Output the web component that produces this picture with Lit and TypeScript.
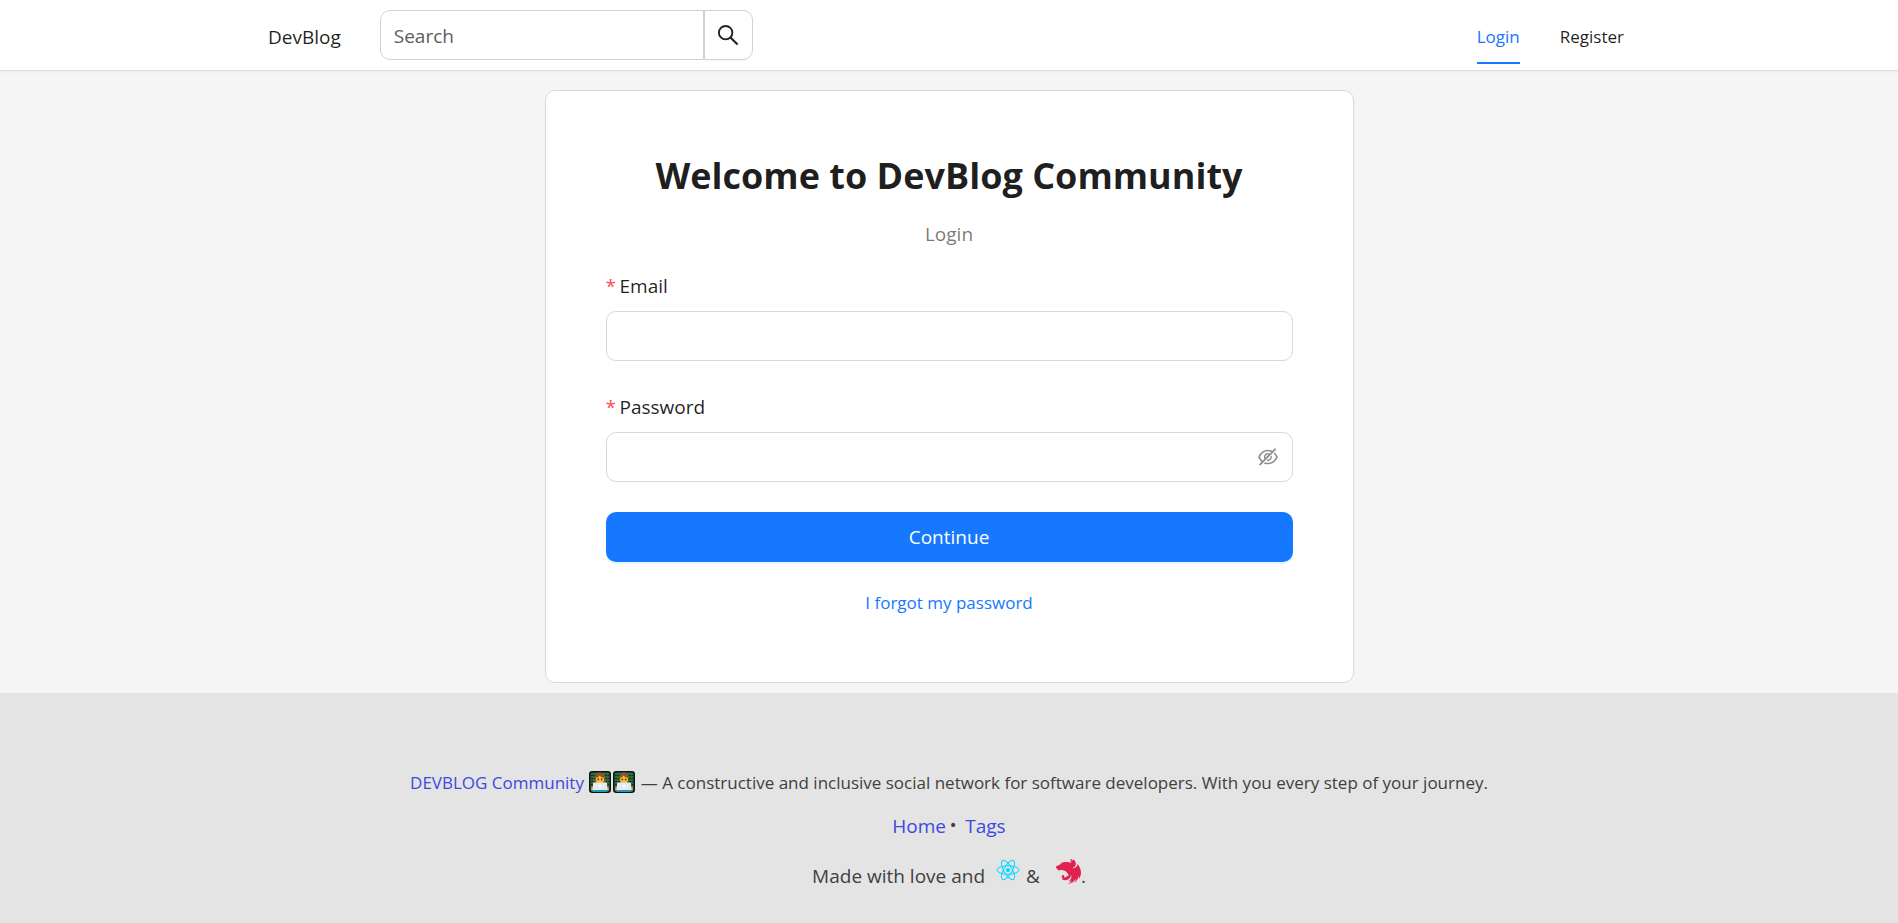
import { LitElement, html, css, svg } from "lit";
import { customElement, state } from "lit/decorators.js";

const searchIcon = html`<svg class="search-icon" viewBox="0 0 24 24" aria-hidden="true">
  <circle cx="9" cy="9" r="7" fill="none" stroke="currentColor" stroke-width="2" />
  <path d="M14 14 L21.5 21.5" fill="none" stroke="currentColor" stroke-width="2.2" />
</svg>`;

const eyeIcon = html`<svg class="eye-icon" viewBox="64 64 896 896" fill="currentColor" aria-hidden="true">
  <path d="M942.2 486.2Q889.47 375.11 816.7 305l-50.88 50.88C807.31 395.53 843.45 447.4 874.7 512 791.5 684.2 673.4 766 512 766q-72.67 0-133.87-22.38L323 798.75Q408 838 512 838q288.3 0 430.2-300.3a60.29 60.29 0 000-51.5zm-63.57-320.64L836 122.88a8 8 0 00-11.32 0L715.31 232.2Q624.86 186 512 186q-288.3 0-430.2 300.3a60.3 60.3 0 000 51.5q56.69 119.4 136.5 191.41L112.48 835a8 8 0 000 11.31L155.17 889a8 8 0 0011.31 0l712.15-712.12a8 8 0 000-11.32zM149.3 512C232.6 339.8 350.7 258 512 258c54.54 0 104.13 9.36 149.12 28.39l-70.3 70.3a176 176 0 00-238.13 238.13l-83.42 83.42C223.1 637.49 183.3 582.28 149.3 512zm246.7 0a112.11 112.11 0 01146.2-106.69L401.31 546.2A112 112 0 01396 512z" />
  <path d="M508 624c-3.46 0-6.87-.16-10.25-.47l-52.82 52.82a176.09 176.09 0 00227.42-227.42l-52.82 52.82c.31 3.38.47 6.79.47 10.25a111.94 111.94 0 01-112 112z" />
</svg>`;

const womanHair = svg`<path d="M5.4 12 C5 4.5 7 1.6 11 1.6 S17 4.5 16.6 12 Z" fill="#8f5430" />`;
const manHair = svg`<path d="M6.6 8 C6 4 8 1.6 11 1.6 S16 4 15.4 8 Z" fill="#8f5430" />`;

// Person at a laptop in front of a dark screen of green code.
const technologist = (label: string, woman: boolean) => html`<svg class="emoji" viewBox="0 0 22 22" role="img" aria-label=${label}>
  <rect x="0.75" y="0.75" width="20.5" height="20.5" rx="2.5" fill="#2c6b3c" stroke="#0d1512" stroke-width="1.5" />
  <path d="M2 4.5H20M2 7.5H20M2 10.5H20M2 13.5H20" stroke="#14241b" stroke-width="0.9" stroke-dasharray="2 0.8" />
  ${woman ? womanHair : manHair}
  <path d="M7 6.8 Q9.5 6.6 10.5 4.4 Q12 6.6 15 6.8 V9 C15 11.8 13.2 13 11 13 S7 11.8 7 9 Z" fill="#fcb827" />
  <circle cx="9.3" cy="8.4" r="0.8" fill="#40302a" />
  <circle cx="12.7" cy="8.4" r="0.8" fill="#40302a" />
  <path d="M2 20 V18 Q2 14.5 5 14 H17 Q20 14.5 20 18 V20 Z" fill="#6f5bb5" />
  <path d="M2.5 16 h2.4 v3.6 h-2.4z M17.1 16 h2.4 v3.6 h-2.4z" fill="#fcb827" />
  <rect x="4" y="11.5" width="14" height="8" rx="1" fill="#e3ebf2" />
  <rect x="9.7" y="14" width="2.6" height="2.4" fill="#fff" />
  <rect x="3.6" y="19" width="14.8" height="2" fill="#1f9ab4" />
</svg>`;

const reactLogo = html`<svg class="react-logo" viewBox="-12 -11 24 22" role="img" aria-label="React">
  <circle r="2.1" fill="#00d8ff" />
  <g fill="none" stroke="#00d8ff" stroke-width="1">
    <ellipse rx="11" ry="4.2" />
    <ellipse rx="11" ry="4.2" transform="rotate(60)" />
    <ellipse rx="11" ry="4.2" transform="rotate(120)" />
  </g>
</svg>`;

const nestLogo = html`<svg class="nest-logo" viewBox="0 0 24 24" fill="#e0234e" role="img" aria-label="NestJS">
  <path d="M14.131.047c-.173 0-.334.037-.483.087.316.21.49.49.576.806.007.043.019.074.025.117a.681.681 0 0 1 .013.112c.024.545-.143.614-.26.936-.18.415-.13.861.086 1.22a.74.74 0 0 0 .074.137c-.235-1.568 1.073-1.803 1.314-2.293.019-.428-.334-.713-.613-.911a1.37 1.37 0 0 0-.732-.21zM16.102.4c-.024.143-.006.106-.012.18-.006.05-.006.112-.012.161-.013.05-.025.1-.044.149-.012.05-.03.1-.05.149l-.067.142c-.02.025-.031.05-.05.075l-.037.055a2.152 2.152 0 0 1-.093.124c-.037.038-.068.08-.112.112v.006c-.037.031-.074.068-.118.1-.13.099-.278.173-.415.266-.043.03-.087.056-.124.093a.906.906 0 0 0-.118.099c-.043.037-.074.074-.111.118-.031.037-.068.08-.093.124a1.582 1.582 0 0 0-.087.13c-.025.05-.043.093-.068.142-.019.05-.037.093-.05.143a2.007 2.007 0 0 0-.043.155c-.006.025-.006.056-.012.08-.007.025-.007.05-.013.075 0 .05-.006.105-.006.155 0 .037 0 .074.006.111 0 .05.006.1.019.155.006.05.018.1.03.15.02.049.032.098.05.148.013.03.031.062.044.087l-1.426-.552c-.241-.068-.477-.13-.719-.186l-.39-.093c-.372-.074-.75-.13-1.128-.167-.013 0-.019-.006-.031-.006A11.082 11.082 0 0 0 8.9 2.855c-.378.025-.756.074-1.134.136a12.45 12.45 0 0 0-.837.174l-.279.074c-.092.037-.18.08-.266.118l-.205.093c-.012.006-.024.006-.03.012-.063.031-.118.056-.174.087a2.738 2.738 0 0 0-.236.118c-.043.018-.086.043-.124.062a.559.559 0 0 1-.055.03c-.056.032-.112.063-.162.094a1.56 1.56 0 0 0-.148.093c-.044.03-.087.055-.124.086-.006.007-.013.007-.019.013-.037.025-.08.056-.118.087l-.012.012-.093.074c-.012.007-.025.019-.037.025-.031.025-.062.056-.093.08-.006.013-.019.02-.025.025-.037.038-.074.069-.111.106-.007 0-.007.006-.013.012a1.742 1.742 0 0 0-.111.106c-.007.006-.007.012-.013.012a1.454 1.454 0 0 0-.093.1c-.012.012-.03.024-.043.036a1.374 1.374 0 0 1-.106.112c-.006.012-.018.019-.024.03-.05.05-.093.1-.143.15l-.018.018c-.1.106-.205.211-.317.304-.111.1-.229.192-.347.273a3.777 3.777 0 0 1-.762.421c-.13.056-.267.106-.403.149-.26.056-.527.161-.756.18-.05 0-.105.012-.155.018l-.155.037-.149.056c-.05.019-.099.044-.148.068-.044.031-.093.056-.137.087a1.011 1.011 0 0 0-.124.106c-.043.03-.087.074-.124.111-.037.043-.074.08-.105.124-.031.05-.068.093-.093.143a1.092 1.092 0 0 0-.087.142c-.025.056-.05.106-.068.161-.019.05-.037.106-.056.161-.012.05-.025.1-.03.15 0 .005-.007.012-.007.018-.012.056-.012.13-.019.167C.006 7.95 0 7.986 0 8.03a.657.657 0 0 0 .074.31v.006c.019.037.044.075.069.112.024.037.05.074.08.111.031.031.068.069.106.1a.906.906 0 0 0 .117.099c.149.13.186.173.378.272.031.019.062.031.1.05.006 0 .012.006.018.006 0 .013 0 .019.006.031a1.272 1.272 0 0 0 .08.298c.02.037.032.074.05.111.007.013.013.025.02.031.024.05.049.093.073.137l.093.13c.031.037.069.08.106.118.037.037.074.068.118.105 0 0 .006.006.012.006.037.031.074.062.112.087a.986.986 0 0 0 .136.08c.043.025.093.05.142.069a.73.73 0 0 0 .124.043c.007.006.013.006.025.012.025.007.056.013.08.019-.018.335-.024.65.026.762.055.124.328-.254.6-.688-.036.428-.061.93 0 1.079.069.155.44-.329.763-.862 4.395-1.016 8.405 2.02 8.826 6.31-.08-.67-.905-1.041-1.283-.948-.186.458-.502 1.047-1.01 1.413.043-.41.025-.83-.062-1.24a4.009 4.009 0 0 1-.769 1.562c-.588.043-1.177-.242-1.487-.67-.025-.018-.031-.055-.05-.08-.018-.043-.037-.087-.05-.13a.515.515 0 0 1-.037-.13c-.006-.044-.006-.087-.006-.137v-.093a.992.992 0 0 1 .031-.13c.013-.043.025-.086.044-.13.024-.043.043-.087.074-.13.105-.298.105-.54-.087-.682a.706.706 0 0 0-.118-.062c-.024-.006-.055-.018-.08-.025l-.05-.018a.847.847 0 0 0-.13-.031.472.472 0 0 0-.13-.019 1.01 1.01 0 0 0-.136-.012c-.031 0-.062.006-.093.006a.484.484 0 0 0-.137.019c-.043.006-.086.012-.13.024a1.068 1.068 0 0 0-.13.044c-.043.018-.08.037-.124.056-.037.018-.074.043-.118.062-1.444.942-.582 3.148.403 3.787-.372.068-.75.148-.855.229l-.013.012c.267.161.546.298.837.416.397.13.818.247 1.004.297v.006a5.996 5.996 0 0 0 1.562.112c2.746-.192 4.996-2.281 5.405-5.033l.037.161c.019.112.043.23.056.347v.006c.012.056.018.112.025.162v.024c.006.056.012.112.012.162.006.068.012.136.012.204v.1c0 .03.007.067.007.098 0 .038-.007.075-.007.112v.087c0 .043-.006.08-.006.124 0 .025 0 .05-.006.08 0 .044-.006.087-.006.137-.006.018-.006.037-.006.055l-.02.143c0 .019 0 .037-.005.056-.007.062-.019.118-.025.18v.012l-.037.174v.018l-.037.167c0 .007-.007.02-.007.025a1.663 1.663 0 0 1-.043.168v.018c-.019.062-.037.118-.05.174-.006.006-.006.012-.006.012l-.056.186c-.024.062-.043.118-.068.18-.025.062-.043.124-.068.18-.025.062-.05.117-.074.18h-.007c-.024.055-.05.117-.08.173a.302.302 0 0 1-.019.043c-.006.006-.006.013-.012.019a5.867 5.867 0 0 1-1.742 2.082c-.05.031-.099.069-.149.106-.012.012-.03.018-.043.03a2.603 2.603 0 0 1-.136.094l.018.037h.007l.26-.037h.006c.161-.025.322-.056.483-.087.044-.006.093-.019.137-.031l.087-.019c.043-.006.086-.018.13-.024.037-.013.074-.02.111-.031.62-.15 1.221-.354 1.798-.595a9.926 9.926 0 0 1-3.85 3.142c.714-.05 1.426-.167 2.114-.366a9.903 9.903 0 0 0 5.857-4.68 9.893 9.893 0 0 1-1.667 3.986 9.758 9.758 0 0 0 1.655-1.376 9.824 9.824 0 0 0 2.61-5.268c.21.98.272 1.99.18 2.987 4.474-6.241.371-12.712-1.346-14.416-.006-.013-.012-.019-.012-.031-.006.006-.006.006-.006.012 0-.006 0-.006-.007-.012 0 .074-.006.148-.012.223a8.34 8.34 0 0 1-.062.415c-.03.136-.068.273-.105.41-.044.13-.093.266-.15.396a5.322 5.322 0 0 1-.185.378 4.735 4.735 0 0 1-.477.688c-.093.111-.192.21-.292.31a3.994 3.994 0 0 1-.18.155l-.142.124a3.459 3.459 0 0 1-.347.241 4.295 4.295 0 0 1-.366.211c-.13.062-.26.118-.39.174a4.364 4.364 0 0 1-.818.223c-.143.025-.285.037-.422.05a4.914 4.914 0 0 1-.297.012 4.66 4.66 0 0 1-.422-.025 3.137 3.137 0 0 1-.421-.062 3.136 3.136 0 0 1-.415-.105h-.007c.137-.013.273-.025.41-.05a4.493 4.493 0 0 0 .818-.223c.136-.05.266-.112.39-.174.13-.062.248-.13.372-.204.118-.08.235-.161.347-.248.112-.087.217-.18.316-.279.105-.093.198-.198.291-.304.093-.111.18-.223.26-.334.013-.019.026-.044.038-.062.062-.1.124-.199.18-.298a4.272 4.272 0 0 0 .334-.775c.044-.13.075-.266.106-.403.025-.142.05-.278.062-.415.012-.142.025-.285.025-.421 0-.1-.007-.199-.013-.298a6.726 6.726 0 0 0-.05-.415 4.493 4.493 0 0 0-.092-.415c-.044-.13-.087-.267-.137-.397-.05-.13-.111-.26-.173-.384-.069-.124-.137-.248-.211-.366a6.843 6.843 0 0 0-.248-.34c-.093-.106-.186-.212-.285-.317a3.878 3.878 0 0 0-.161-.155c-.28-.217-.57-.421-.862-.607a1.154 1.154 0 0 0-.124-.062 2.415 2.415 0 0 0-.589-.26Z" />
</svg>`;

@customElement("site-header")
class SiteHeader extends LitElement {
  static styles = css`
    :host {
      display: block;
      background: #fff;
      border-bottom: 1px solid #dedede;
      box-shadow: 0 1px 2px rgba(0, 0, 0, 0.05);
    }
    .bar {
      box-sizing: border-box;
      max-width: 1402px;
      height: 70px;
      margin: 0 auto;
      padding: 0 20px;
      display: flex;
      align-items: center;
    }
    a {
      text-decoration: none;
      color: rgba(0, 0, 0, 0.88);
    }
    .brand {
      font-size: 19px;
      line-height: 30px;
      padding-top: 3px;
      margin-right: 39px;
    }
    .search {
      display: flex;
      flex: 0 1 373px;
      min-width: 0;
      height: 50px;
    }
    .search-input {
      box-sizing: border-box;
      flex: 1;
      min-width: 0;
      padding: 2px 13px 0;
      border: 1px solid #d0d0d0;
      border-radius: 10px 0 0 10px;
      font: inherit;
      font-size: 19px;
      color: rgba(0, 0, 0, 0.88);
      background: #fff;
      outline: none;
    }
    .search-input::placeholder {
      color: #5c5c5c;
      opacity: 1;
    }
    .search-button {
      box-sizing: border-box;
      width: 49px;
      padding: 0;
      display: grid;
      place-items: center;
      border: 1px solid #d0d0d0;
      border-radius: 0 10px 10px 0;
      background: #fff;
      color: #222;
      box-shadow: 0 2px 0 rgba(0, 0, 0, 0.02);
    }
    .search-icon {
      width: 23px;
      height: 23px;
    }
    nav {
      margin-left: auto;
      display: flex;
      gap: 40px;
      font-size: 17px;
      padding-right: 6px;
    }
    nav a {
      line-height: 50px;
      padding: 6px 0 0;
      border-bottom: 2px solid transparent;
    }
    nav .active {
      color: #1677ff;
      border-color: #1677ff;
    }
  `;
  render() {
    return html`<div class="bar">
      <a class="brand" href="#">DevBlog</a>
      <form class="search" role="search" @submit=${(e: Event) => e.preventDefault()}>
        <input class="search-input" type="text" placeholder="Search" aria-label="Search" />
        <button class="search-button" aria-label="Submit search">${searchIcon}</button>
      </form>
      <nav><a class="active" href="#login">Login</a><a href="#register">Register</a></nav>
    </div>`;
  }
}

@customElement("login-card")
class LoginCard extends LitElement {
  @state() private visible = false;

  static styles = css`
    :host {
      box-sizing: border-box;
      display: block;
      width: 100%;
      max-width: 809px;
      padding: 60px;
      border: 1px solid #d9d9d9;
      border-radius: 10px;
      background: #fff;
      color: rgba(0, 0, 0, 0.88);
      font-size: 19px;
    }
    h1 {
      margin: 0;
      font-size: 36px;
      line-height: 50px;
      font-weight: 700;
      text-align: center;
    }
    .subtitle {
      margin: 17px 0 0;
      line-height: 32px;
      color: rgba(0, 0, 0, 0.55);
      text-align: center;
    }
    form {
      margin-top: 20px;
    }
    .field {
      margin-bottom: 30px;
    }
    label {
      display: flex;
      align-items: center;
      gap: 5px;
      line-height: 32px;
      padding-bottom: 9px;
    }
    .mark {
      color: #ff4d4f;
      width: 9px;
    }
    .box {
      box-sizing: border-box;
      display: flex;
      align-items: center;
      height: 50px;
      padding: 0 14px;
      border: 1px solid #d9d9d9;
      border-radius: 10px;
    }
    input {
      flex: 1;
      min-width: 0;
      border: 0;
      padding: 0;
      outline: none;
      background: none;
      font: inherit;
      color: inherit;
    }
    .toggle {
      display: flex;
      border: 0;
      padding: 0;
      background: none;
      color: rgba(0, 0, 0, 0.45);
    }
    .eye-icon {
      width: 20px;
      height: 20px;
    }
    .submit {
      display: block;
      width: 100%;
      height: 50px;
      border: 0;
      border-radius: 10px;
      background: #1677ff;
      color: #fff;
      font: inherit;
      box-shadow: 0 2px 0 rgba(5, 145, 255, 0.1);
    }
    .forgot {
      display: block;
      margin: 26px 0 0;
      font-size: 17px;
      line-height: 30px;
      padding-bottom: 4px;
      text-align: center;
    }
    .forgot a {
      color: #1677ff;
      text-decoration: none;
    }
  `;
  render() {
    return html`<h1>Welcome to DevBlog Community</h1>
      <p class="subtitle">Login</p>
      <form @submit=${(e: Event) => e.preventDefault()}>
        <div class="field">
          <label for="email"><span class="mark">*</span>Email</label>
          <div class="box"><input id="email" type="email" /></div>
        </div>
        <div class="field">
          <label for="password"><span class="mark">*</span>Password</label>
          <div class="box">
            <input id="password" type=${this.visible ? "text" : "password"} />
            <button class="toggle" type="button" aria-label="Toggle password visibility"
              @click=${() => (this.visible = !this.visible)}>${eyeIcon}</button>
          </div>
        </div>
        <button class="submit">Continue</button>
      </form>
      <p class="forgot"><a href="#forgot">I forgot my password</a></p>`;
  }
}

@customElement("site-footer")
class SiteFooter extends LitElement {
  static styles = css`
    :host {
      box-sizing: border-box;
      display: block;
      padding: 74px 20px 22px;
      background: #e4e4e4;
      color: #404040;
      text-align: center;
      font-size: 19px;
    }
    p {
      margin: 0;
    }
    a {
      color: #3b49df;
      text-decoration: none;
    }
    .about {
      font-size: 17px;
      line-height: 32px;
    }
    .emoji {
      width: 22px;
      height: 22px;
      vertical-align: -4px;
      margin: 0 1px;
    }
    .links {
      display: flex;
      justify-content: center;
      margin-top: 10px;
      line-height: 34px;
    }
    .dot {
      margin: 0 8px 0 3px;
      line-height: 32px;
      font-family: "DejaVu Sans", sans-serif;
      font-size: 14px;
    }
    .made {
      margin-top: 16px;
      display: flex;
      justify-content: center;
      line-height: 34px;
    }
    .react-logo {
      width: 24px;
      height: 22px;
      margin: 0 6px 0 11px;
    }
    .nest-logo {
      width: 25px;
      height: 25px;
      margin-left: 16px;
    }
  `;
  render() {
    return html`<p class="about">
        <a href="#">DEVBLOG Community</a> ${technologist("woman technologist", true)}${technologist("man technologist", false)}
        — A constructive and inclusive social network for software developers. With you every step of your journey.
      </p>
      <div class="links"><a href="#home">Home</a><span class="dot">•</span><a href="#tags">Tags</a></div>
      <div class="made"><span>Made with love and</span>${reactLogo}<span>&amp;</span>${nestLogo}<span>.</span></div>`;
  }
}

@customElement("app-root")
class AppRoot extends LitElement {
  static styles = css`
    :host {
      display: flex;
      flex-direction: column;
      min-height: 100vh;
      background: #f5f5f5;
      font-family: "Open Sans", "Noto Sans", sans-serif;
    }
    main {
      display: flex;
      justify-content: center;
      padding: 19px 20px 10px;
    }
    site-footer {
      flex: 1 0 auto;
    }
  `;
  render() {
    return html`<site-header></site-header>
      <main><login-card></login-card></main>
      <site-footer></site-footer>`;
  }
}
